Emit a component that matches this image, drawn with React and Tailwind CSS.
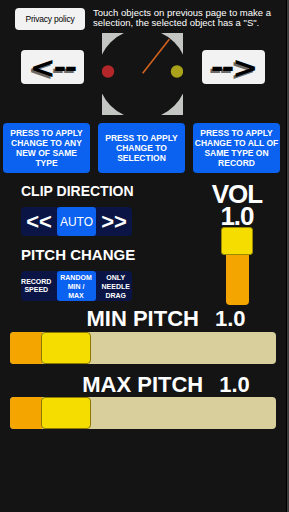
import React from "react";

const font = { fontFamily: '"Liberation Sans", Arial, sans-serif' };

function Dial() {
  return (
    <svg width="81" height="82" viewBox="0 0 81 82">
      <defs>
        <clipPath id="sq">
          <rect x="0" y="0" width="81" height="82" />
        </clipPath>
      </defs>
      <rect x="0" y="0" width="81" height="82" fill="#c4c6c4" />
      <g clipPath="url(#sq)">
        <circle cx="40.5" cy="41" r="45" fill="#141414" />
      </g>
      <circle cx="6" cy="38.5" r="6.2" fill="#b3262a" />
      <circle cx="75" cy="38.5" r="6.2" fill="#a9a21a" />
      <line x1="40.7" y1="40.3" x2="67.3" y2="6.3" stroke="#d2621e" strokeWidth="1.6" />
    </svg>
  );
}

function ArrowButton({ label }) {
  return (
    <div className="w-[63px] h-[34px] mt-[17px] rounded-[4px] bg-[#f2f2f2] flex items-center justify-center">
      <span
        className="text-[31px] font-bold text-black leading-none tracking-[-2px]"
        style={{ fontFamily: '"DejaVu Sans", sans-serif', textShadow: "-2px 2px 0 #6a6a6a" }}
      >
        {label}
      </span>
    </div>
  );
}

function BlueButton({ lines }) {
  return (
    <div className="w-[87px] h-[50px] rounded-[4px] bg-[#0b62f0] flex flex-col items-center justify-center text-white text-[8.5px] font-bold leading-[10px] text-center">
      {lines.map((l) => (
        <span key={l}>{l}</span>
      ))}
    </div>
  );
}

function Slider() {
  return (
    <div className="mx-[10px] h-[32px] flex rounded-[4px] bg-[#d8cf9c]">
      <div className="w-[32px] h-full rounded-l-[4px] bg-[#f5a500]" />
      <div className="w-[50px] h-full -ml-[1px] rounded-[4px] bg-[#f5dd00] border border-[#8a7a00]" />
    </div>
  );
}

export default function App() {
  return (
    <div className="w-[289px] h-[512px] flex bg-[#141414] text-white overflow-hidden" style={font}>
      <div className="w-[286px] h-full">
        {/* top row */}
        <div className="flex pt-[8px]">
          <div className="ml-[15px] w-[70px] h-[22px] rounded-[4px] bg-[#f2f2f2] flex items-center justify-center text-black text-[8.5px] tracking-[-0.2px]">
            Privacy policy
          </div>
          <p className="ml-[8px] w-[190px] text-[9.5px] leading-[10px] text-white">
            Touch objects on previous page to make a selection, the selected object has a "S".
          </p>
        </div>

        <div className="flex items-start mt-[3px]">
          <div className="ml-[21px]">
            <ArrowButton label="<--" />
          </div>
          <div className="ml-[18px]">
            <Dial />
          </div>
          <div className="ml-[19px]">
            <ArrowButton label="-->" />
          </div>
        </div>

        {/* apply buttons */}
        <div className="flex gap-[8px] px-[3px] mt-[8px]">
          <BlueButton lines={["PRESS TO APPLY", "CHANGE TO ANY", "NEW OF SAME", "TYPE"]} />
          <BlueButton lines={["PRESS TO APPLY", "CHANGE TO", "SELECTION"]} />
          <BlueButton lines={["PRESS TO APPLY", "CHANGE TO ALL OF", "SAME TYPE ON", "RECORD"]} />
        </div>

        {/* middle */}
        <div className="flex mt-[10px]">
          <div className="ml-[21px] w-[111px] flex flex-col">
            <div className="text-[14px] font-bold leading-[16px] text-center whitespace-nowrap">CLIP DIRECTION</div>
            <div className="mt-[8px] h-[29px] flex rounded-[4px] bg-[#0a1545] overflow-hidden">
              <div className="flex-1 flex items-center justify-center text-[22px] font-bold">&lt;&lt;</div>
              <div className="w-[39px] bg-[#0b62f0] rounded-[3px] flex items-center justify-center text-[12px]">AUTO</div>
              <div className="flex-1 flex items-center justify-center text-[22px] font-bold">&gt;&gt;</div>
            </div>
            <div className="mt-[11px] text-[15px] font-bold leading-[16px] text-center whitespace-nowrap">PITCH CHANGE</div>
            <div className="mt-[8px] h-[30px] flex rounded-[4px] bg-[#0a1545]">
              <div className="flex-1 flex flex-col items-center justify-center text-[7px] font-bold leading-[8px] -ml-[5px]">
                <span>RECORD</span>
                <span>SPEED</span>
              </div>
              <div className="w-[39px] bg-[#0b62f0] rounded-[3px] flex flex-col items-center justify-center text-[7px] font-bold leading-[9px]">
                <span>RANDOM</span>
                <span>MIN /</span>
                <span>MAX</span>
              </div>
              <div className="flex-1 flex flex-col items-center justify-center text-[7px] font-bold leading-[9px] -mr-[4px]">
                <span>ONLY</span>
                <span>NEEDLE</span>
                <span>DRAG</span>
              </div>
            </div>
          </div>

          <div className="ml-[79px] w-[52px] flex flex-col items-center">
            <div className="text-[26px] font-bold leading-[22px] tracking-[-1px] text-center">
              VOL
              <br />
              1.0
            </div>
            <div className="w-[32px] h-[28px] rounded-[3px] bg-[#f5dd00] border border-[#9a8a00]" />
            <div className="w-[23px] h-[50px] rounded-b-[4px] bg-[#f5a500]" />
          </div>
        </div>

        {/* pitch sliders */}
        <div className="mt-[2px] flex justify-center gap-[16px] text-[22px] leading-[24px] font-bold pl-[46px]">
          <span>MIN PITCH</span>
          <span>1.0</span>
        </div>
        <div className="mt-[1px]">
          <Slider />
        </div>
        <div className="mt-[9px] flex justify-center gap-[16px] text-[22px] leading-[24px] font-bold pl-[46px]">
          <span>MAX PITCH</span>
          <span>1.0</span>
        </div>
        <div>
          <Slider />
        </div>
      </div>
      <div className="w-[1px] h-full bg-black" />
      <div className="w-[2px] h-full bg-[#3c3c3c]" />
    </div>
  );
}
